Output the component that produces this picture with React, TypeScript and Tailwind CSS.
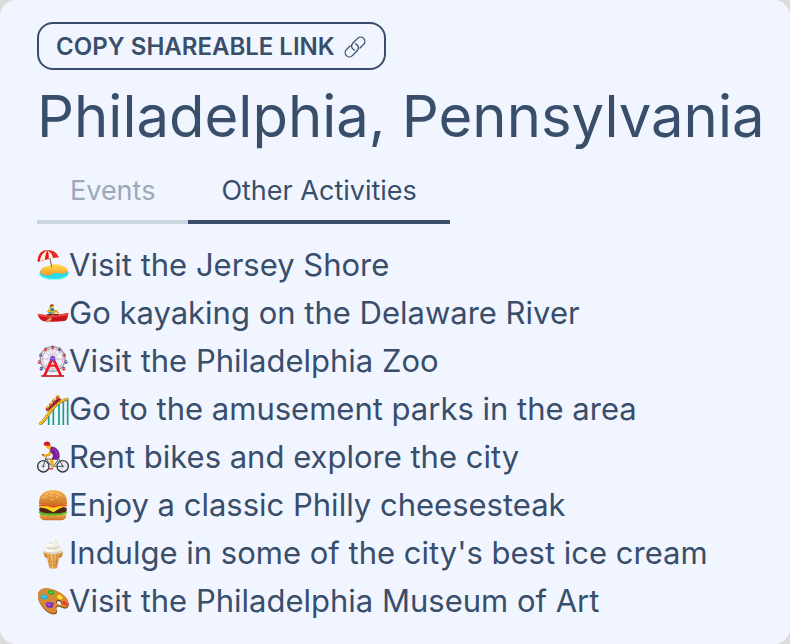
import { useState } from "react";
import type { ReactNode } from "react";

function Icon({ children }: { children: ReactNode }) {
  return (
    <svg viewBox="0 0 96 96" className="size-8 shrink-0" aria-hidden="true">
      {children}
    </svg>
  );
}

function LinkIcon() {
  return (
    <svg viewBox="0 0 24 24" className="size-6" fill="none" stroke="currentColor" strokeWidth="1.3" strokeLinecap="round" aria-hidden="true">
      <path d="M17 13 20.6 9.4A4.2 4.2 0 0 0 14.6 3.4L9.8 8.2A4.2 4.2 0 0 0 11.5 15.2" />
      <path d="M7 11 3.4 14.6A4.2 4.2 0 0 0 9.4 20.6L14.2 15.8A4.2 4.2 0 0 0 12.5 8.8" />
    </svg>
  );
}

function Beach() {
  return (
    <Icon>
      <defs>
        <linearGradient id="sand" x2="0" y2="1">
          <stop stopColor="#ffe45a" />
          <stop offset="1" stopColor="#f59b1e" />
        </linearGradient>
      </defs>
      <ellipse cx="51" cy="74" rx="44" ry="20" fill="#9cf8f6" />
      <ellipse cx="51" cy="72" rx="43" ry="18" fill="#25dce8" />
      <path d="M10 68c1-12 13-16 24-17 10-8 32-9 45 1 10 3 15 10 11 16-9 13-30 0-42 6-15 8-39 5-38-6Z" fill="url(#sand)" />
      <path d="m34 10 11 45" stroke="#87614b" strokeWidth="3" />
      <path d="M2 38C2 15 14 3 31 4c17-1 29 7 34 21l-20 2-21 6-22 6Z" fill="#e9171b" />
      <path d="M9 35C11 20 18 9 31 5c-5 8-7 17-7 27l-15 4ZM32 5c9 4 14 11 16 21l-13 3C36 18 35 11 32 5Z" fill="#fff4dc" />
      <path d="M31 5c10 1 20 8 25 20l9 0C60 11 46 3 31 5Z" fill="#f23126" />
    </Icon>
  );
}

function Rowing() {
  return (
    <Icon>
      <path d="M2 50c22 7 64 4 92-2-1 15-4 22-12 24q-30 4-62 1C11 70 4 62 2 50Z" fill="#c9141b" />
      <path d="M2 50c25 7 66 4 92-2l-1 7c-23 6-67 8-89 2Z" fill="#f1443c" />
      <path d="M28 51h38l-4 4H32Z" fill="#771b18" />
      <path d="M38 31c5-4 10-1 12 3l5 14-16 4-6-5 5-9Z" fill="#168db1" />
      <path d="m46 49 11-8 8 8" fill="none" stroke="#e7a024" strokeWidth="5" />
      <path d="m41 34-8 9 18 2" fill="none" stroke="#f3b51e" strokeWidth="5" strokeLinecap="round" />
      <circle cx="45" cy="28" r="5" fill="#ffc52c" />
      <path d="M38 27c1-7 12-7 14 0l-7 0-3 4Z" fill="#985027" />
      <path d="m55 44-16 20" stroke="#c88544" strokeWidth="3" />
      <path d="m40 61 5 4-10 10c-5 3-9-1-6-6Z" fill="#dfaa72" stroke="#9a5838" />
    </Icon>
  );
}

function FerrisWheel() {
  const cars = [
    [47, 4, "#ed5154"], [68, 10, "#7662b2"], [82, 27, "#d6484e"], [87, 48, "#7662b2"], [80, 68, "#d6484e"],
    [13, 68, "#7662b2"], [7, 48, "#d6484e"], [11, 27, "#7662b2"], [26, 10, "#ed5154"],
  ] as const;
  return (
    <Icon>
      <circle cx="47" cy="42" r="37" fill="none" stroke="#9699a4" strokeWidth="4" />
      <circle cx="47" cy="42" r="31" fill="none" stroke="#c9828c" strokeWidth="2" />
      <path d="M47 4v76M9 42h76M20 15l54 54M74 15 20 69M32 7l30 70M62 7 32 77" stroke="#bd8290" strokeWidth="1.6" />
      <circle cx="47" cy="42" r="15" fill="none" stroke="#c6c8d1" strokeWidth="2" />
      {cars.map(([x, y, color]) => (
        <g key={`${x}-${y}`}>
          <path d={`M${x - 5} ${y + 2}h10v4q-5 6-10 0Z`} fill={color} />
          <path d={`M${x - 5} ${y + 1}q5-7 10 0Z`} fill="#55535f" />
        </g>
      ))}
      <path d="m45 42-23 51M49 42l23 51" fill="none" stroke="#ed1723" strokeWidth="8" />
      <path d="M36 66q11-9 22 0" fill="none" stroke="#ed1723" strokeWidth="6" />
      <path d="M13 93h68" stroke="#b91f2a" strokeWidth="5" />
      <circle cx="47" cy="41" r="8" fill="#6e43ce" />
      <path d="M42 41h10" stroke="#aa83f0" strokeWidth="3" />
    </Icon>
  );
}

function Coaster() {
  return (
    <Icon>
      <path d="M35 68v28M49 45v51M66 27v69M79 19v77M92 16v80" stroke="#10a08c" strokeWidth="5" />
      <path d="M8 94C34 77 39 32 92 18" fill="none" stroke="#a75c17" strokeWidth="10" />
      <path d="M7 94C34 77 39 31 92 17" fill="none" stroke="#f6d52b" strokeWidth="7" />
      <path d="M8 94C34 77 39 31 92 17" fill="none" stroke="#8b6520" strokeWidth="4" strokeDasharray="2 5" />
      <path d="m27 50 37-38 9 8-40 35Z" fill="#c93525" />
      <path d="m28 53 40-37" stroke="#5b2630" strokeWidth="5" />
      {[[32, 42], [42, 31], [51, 20], [62, 9]].map(([x, y]) => (
        <g key={x}>
          <path d={`m${x - 5} ${y + 2} 8 8`} stroke="#e13626" strokeWidth="6" />
          <circle cx={x} cy={y} r="4" fill="#f5b634" />
          <path d={`m${x} ${y + 4} 6-3`} stroke="#6e8d37" strokeWidth="3" />
        </g>
      ))}
    </Icon>
  );
}

function Cyclist() {
  return (
    <Icon>
      {[19, 77].map((x) => (
        <g key={x} fill="none" stroke="#a5a8ae">
          <circle cx={x} cy="76" r="17" stroke="#34363b" strokeWidth="4" />
          <path d={`M${x} 61v30M${x - 15} 76h30M${x - 11} 65l22 22M${x + 11} 65l-22 22`} />
          <circle cx={x} cy="76" r="3" fill="#54565b" />
        </g>
      ))}
      <path d="m19 76 9-30M27 54l21 25 16-24-36-1M65 52l12 24H48" fill="none" stroke="#54585f" strokeWidth="3" />
      <path d="m23 44-6-3" stroke="#b12d35" strokeWidth="5" strokeLinecap="round" />
      <path d="m42 23-5 19-15 2" fill="none" stroke="#f4a80f" strokeWidth="7" strokeLinecap="round" strokeLinejoin="round" />
      <path d="M58 48 43 56l5 22" fill="none" stroke="#f5aa0c" strokeWidth="9" strokeLinejoin="round" />
      <path d="m46 83-9 1" stroke="#e43d4c" strokeWidth="5" strokeLinecap="round" />
      <path d="M39 17c17-2 31 12 29 31-2 8-13 8-24 8l4-13-8-11Z" fill="#792198" />
      <path d="M50 23q11 8 12 23" fill="none" stroke="#9c36b7" strokeWidth="4" />
      <path d="M26 13c0 10 10 16 16 7l-2-10Z" fill="#fdb91a" />
      <path d="M21 13C16 1 33-2 39 6l1 9-18-1Z" fill="#e12831" />
      <path d="M24 7h12" stroke="#8b1821" strokeWidth="3" />
    </Icon>
  );
}

function Burger() {
  return (
    <Icon>
      <defs>
        <linearGradient id="bun" x2="0" y2="1">
          <stop stopColor="#f9b951" />
          <stop offset="1" stopColor="#c96c20" />
        </linearGradient>
      </defs>
      <path d="M8 74h80c1 14-6 20-20 20H28C14 94 7 88 8 74Z" fill="url(#bun)" />
      <path d="M5 70c8-7 79-7 86 0-3 8-9 2-14 7-8 5-12-2-18 2-8 5-13-3-20 1-8 3-10-5-17-1-7 2-13-2-17-9Z" fill="#55bc27" />
      <path d="M7 57c14-7 68-7 82 0v10c-13 9-69 9-82 0Z" fill="#522319" />
      <path d="M6 50h84l-24 9-17 11-20-11L6 54Z" fill="#ffd523" />
      <path d="M6 42h84v10H65l-16 4-18-4H6Z" fill="#e84c20" />
      <path d="M6 46h84" stroke="#f2c78b" strokeWidth="3" />
      <path d="M7 45C3 19 21 3 48 3s46 16 41 42c-10 6-72 6-82 0Z" fill="url(#bun)" />
      <path d="m27 17 4-2m12-4 4 1m13 2 4 2m-41 9 4-1m13-4 4 1m14 2 4 2m7-7 3 3M16 27l3-2m25 7 4-1" stroke="#ffe3a0" strokeWidth="2.5" strokeLinecap="round" />
    </Icon>
  );
}

function IceCream() {
  return (
    <Icon>
      <defs>
        <linearGradient id="cone">
          <stop stopColor="#d78b31" />
          <stop offset=".45" stopColor="#f4c070" />
          <stop offset="1" stopColor="#ce8131" />
        </linearGradient>
      </defs>
      <path d="m29 57 38 0-7 37q-12 3-23 0Z" fill="url(#cone)" />
      <path d="m41 64 2 29m7-29v29m9-29-3 28M33 74h31M36 84h25" stroke="#bd782e" strokeWidth="1.5" />
      <path d="M19 44h59l-3 15c-8 9-45 9-53 0Z" fill="url(#cone)" />
      <path d="M28 51v11m10-10v13m11-13v14m11-14v12m9-13v10" stroke="#b56e25" strokeWidth="2" />
      <path d="M19 44c-3-9 3-14 8-15-3-8 5-12 13-12 9-1 12-7 5-16 14 2 19 11 14 19 9 0 13 7 9 13 8 0 12 6 9 11-9 9-50 9-58 0Z" fill="#f4eee2" />
      <path d="M29 31c11 6 29 4 39-3M41 18c8 4 14 3 18-2M22 44c15 6 39 6 52-2" fill="none" stroke="#cfc2ae" strokeWidth="3" />
      <path d="M28 29c9-8 20-5 27-12M24 38c8 4 17 3 23 2M44 12c6-3 8-7 5-11" fill="none" stroke="#fff" strokeWidth="4" />
    </Icon>
  );
}

function Palette() {
  return (
    <Icon>
      <path d="M3 32C4 10 28 6 53 16c25 9 46 30 42 46-4 14-18 8-24 5-9-4-15 0-12 7 4 10-1 16-13 14C25 84 1 53 3 32Z" fill="#9a541c" />
      <path d="M3 29C4 7 28 6 53 15c25 9 45 28 41 43-4 13-18 8-24 5-9-4-17 1-13 9 4 9-2 13-12 12C25 81 1 50 3 29Z" fill="#d68a31" />
      <ellipse cx="66" cy="52" rx="9" ry="7" fill="#734421" transform="rotate(25 66 52)" />
      <ellipse cx="66" cy="54" rx="7" ry="5" fill="#f0f5ff" transform="rotate(25 66 54)" />
      <path d="M33 22c0-8 9-9 13-5 8 1 8 11 0 12-9 2-11-1-13-7Z" fill="#24b72b" />
      <path d="M12 31c4-8 11-1 15 0 8 1 9 12 0 12-5 3-8-1-14-3-3-2-4-6-1-9Z" fill="#23b4dc" />
      <path d="M61 32c3-6 10-2 14 2 5 5 2 11-5 9-6 1-12-6-9-11Z" fill="#ffd91c" />
      <path d="M76 52c2-7 9-3 12 0 8 6 4 12-2 9-6-1-11-3-10-9Z" fill="#ef3830" />
      <path d="M27 57c2-9 9-3 14-5 9-1 11 6 7 9 2 8-5 10-10 7-7 1-13-4-11-11Z" fill="#842db8" />
      <path d="m17 33 7 3m15-14 6 0M32 58l7 1m27-23 5 3" stroke="#fff" strokeOpacity=".4" strokeWidth="3" strokeLinecap="round" />
    </Icon>
  );
}

const activities = [
  { icon: <Beach />, text: "Visit the Jersey Shore" },
  { icon: <Rowing />, text: "Go kayaking on the Delaware River" },
  { icon: <FerrisWheel />, text: "Visit the Philadelphia Zoo" },
  { icon: <Coaster />, text: "Go to the amusement parks in the area" },
  { icon: <Cyclist />, text: "Rent bikes and explore the city" },
  { icon: <Burger />, text: "Enjoy a classic Philly cheesesteak" },
  { icon: <IceCream />, text: "Indulge in some of the city's best ice cream" },
  { icon: <Palette />, text: "Visit the Philadelphia Museum of Art" },
];

const tabs = ["Events", "Other Activities"];

export default function App() {
  const [active, setActive] = useState("Other Activities");
  return (
    <div className="min-h-screen bg-[#dcdcdc] font-['Inter','Liberation_Sans',sans-serif] text-[#394e6a]">
      <main className="flex min-h-screen flex-col items-start rounded-2xl bg-[#f0f5ff] px-[37px] pt-[22px] pb-4">
        <button type="button" className="flex h-12 items-center gap-2 rounded-2xl border-2 border-[#394e6a] px-[17px] pt-0.5 text-2xl font-semibold whitespace-nowrap">
          COPY SHAREABLE LINK
          <LinkIcon />
        </button>
        <h1 className="mt-4 text-[58px] leading-[60px] whitespace-nowrap">Philadelphia, Pennsylvania</h1>
        <div role="tablist" className="mt-4 flex">
          {tabs.map((tab) => (
            <button
              key={tab}
              type="button"
              role="tab"
              aria-selected={active === tab}
              onClick={() => setActive(tab)}
              className={`h-[62px] border-b-4 px-[33px] text-[27px] whitespace-nowrap ${active === tab ? "border-[#394e6a]" : "border-[#cbd4e1] text-[#9ca9bc]"}`}
            >
              {tab}
            </button>
          ))}
        </div>
        <ul className="mt-[17px] text-[31px] leading-[48px]">
          {activities.map(({ icon, text }) => (
            <li key={text} className="flex items-center">
              {icon}
              <span>{text}</span>
            </li>
          ))}
        </ul>
      </main>
    </div>
  );
}
